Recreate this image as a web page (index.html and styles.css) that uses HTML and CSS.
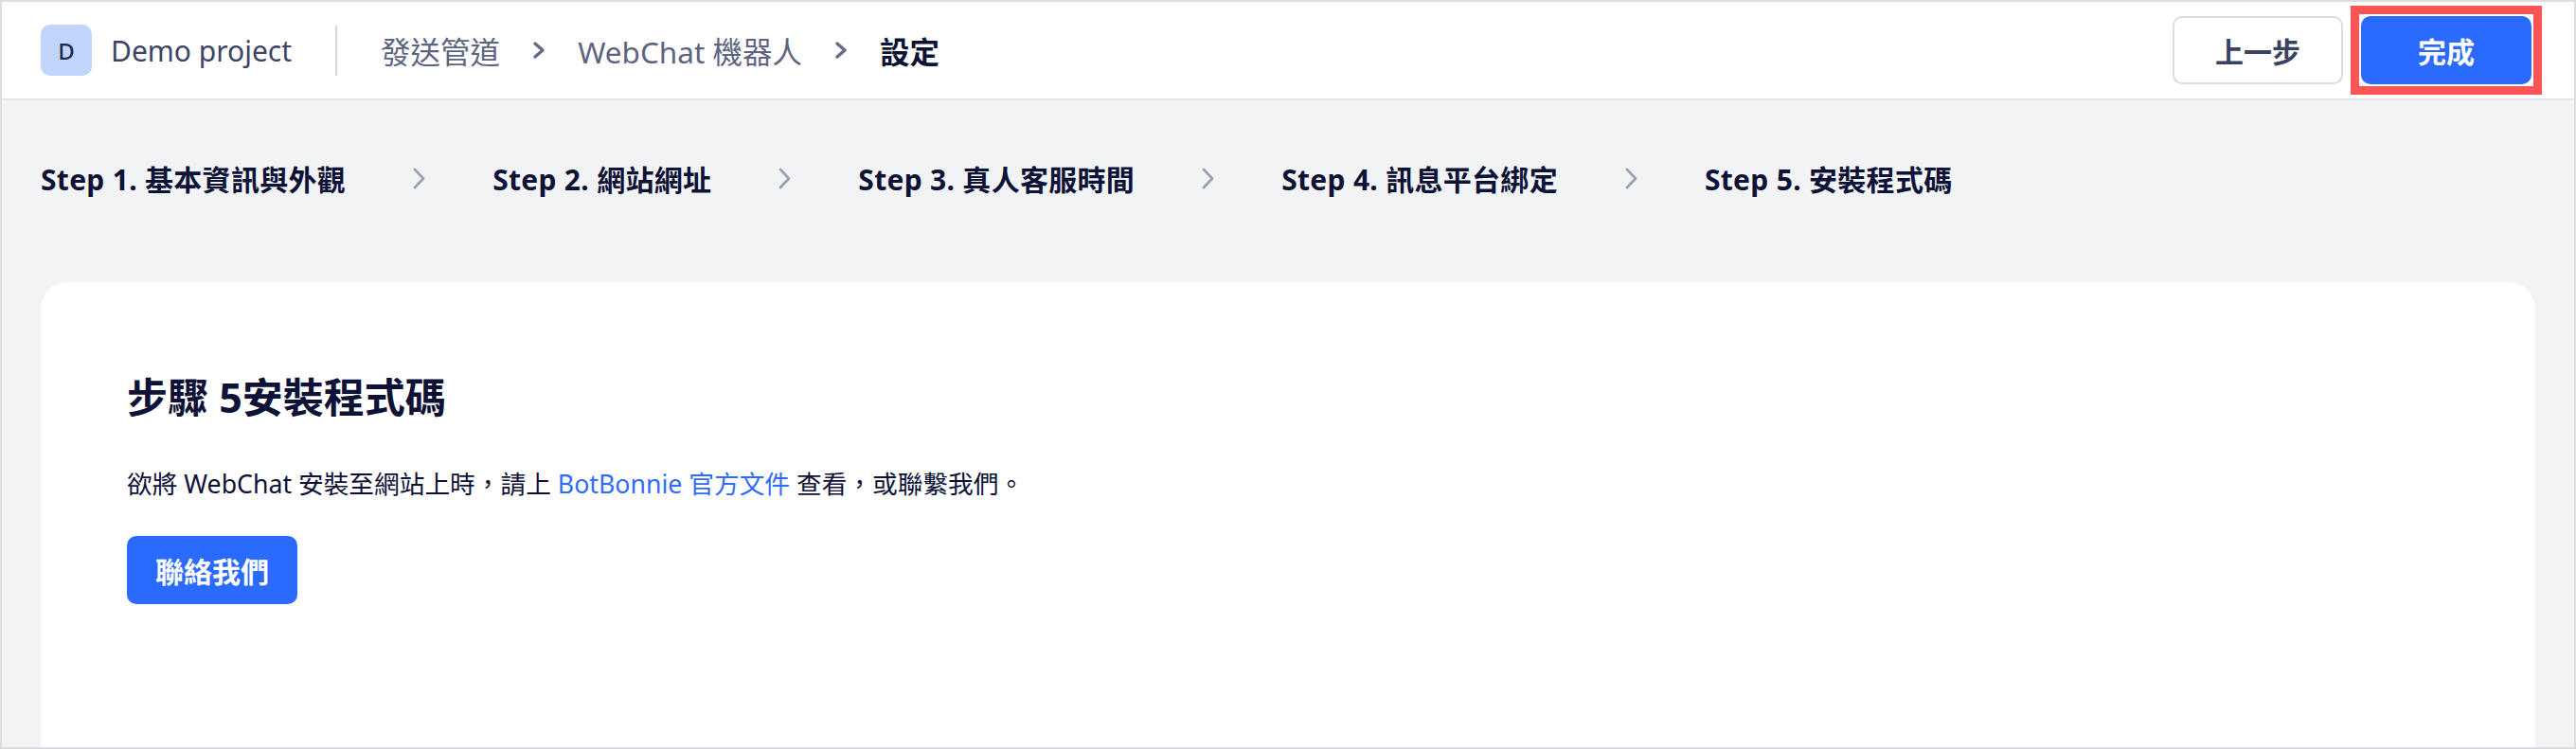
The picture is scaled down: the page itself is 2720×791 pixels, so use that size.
FILE: index.html
```html
<!DOCTYPE html>
<html lang="zh-Hant">
<head>
    <meta charset="UTF-8">
    <meta name="viewport" content="width=device-width, initial-scale=1.0">
    <link rel="stylesheet" href="styles.css">
    <title>WebChat 機器人 - 設定</title>
</head>
<body>
    <div class="screen">
        <header class="topbar">
            <div class="project">
                <span class="avatar">D</span>
                <span class="project-name">Demo project</span>
            </div>
            <span class="divider"></span>
            <nav class="crumbs">
                <span class="crumb">發送管道</span>
                <svg class="crumb-arrow" width="14" height="20" viewBox="0 0 14 20"><polyline points="3,3 11,10 3,17" /></svg>
                <span class="crumb">WebChat 機器人</span>
                <svg class="crumb-arrow" width="14" height="20" viewBox="0 0 14 20"><polyline points="3,3 11,10 3,17" /></svg>
                <span class="crumb current">設定</span>
            </nav>
            <div class="actions">
                <button class="btn btn-outline">上一步</button>
                <button class="btn btn-primary marked">完成</button>
            </div>
        </header>

        <main class="content">
            <div class="steps">
                <span class="step">Step 1. 基本資訊與外觀</span>
                <svg class="step-arrow" width="15" height="25" viewBox="0 0 15 25"><polyline points="3,3 12,12.5 3,22" /></svg>
                <span class="step">Step 2. 網站網址</span>
                <svg class="step-arrow" width="15" height="25" viewBox="0 0 15 25"><polyline points="3,3 12,12.5 3,22" /></svg>
                <span class="step">Step 3. 真人客服時間</span>
                <svg class="step-arrow" width="15" height="25" viewBox="0 0 15 25"><polyline points="3,3 12,12.5 3,22" /></svg>
                <span class="step">Step 4. 訊息平台綁定</span>
                <svg class="step-arrow" width="15" height="25" viewBox="0 0 15 25"><polyline points="3,3 12,12.5 3,22" /></svg>
                <span class="step">Step 5. 安裝程式碼</span>
            </div>

            <section class="card">
                <h2>步驟 5安裝程式碼</h2>
                <p>欲將 WebChat 安裝至網站上時，請上 <a href="#">BotBonnie 官方文件</a> 查看，或聯繫我們。</p>
                <button class="btn btn-primary">聯絡我們</button>
            </section>
        </main>
    </div>
</body>
</html>
```

FILE: styles.css
```css
* {
    box-sizing: border-box;
}

body {
    margin: 0;
    font-family: "Noto Sans", "Noto Sans CJK TC", sans-serif;
    color: #0d1236;
    background: #ffffff;
}

.screen {
    height: 791px;
    border: 2px solid #dcdde1;
    display: flex;
    flex-direction: column;
    overflow: hidden;
}

/* top bar */

.topbar {
    height: 104px;
    flex-shrink: 0;
    background: #ffffff;
    border-bottom: 2px solid #e4e6ea;
    display: flex;
    align-items: center;
    padding: 0 45px 0 41px;
}

.project {
    display: flex;
    align-items: center;
    gap: 20px;
}

.avatar {
    width: 54px;
    height: 54px;
    border-radius: 10px;
    background: #c2d6fd;
    color: #232a4d;
    font-size: 24px;
    font-weight: 500;
    display: flex;
    align-items: center;
    justify-content: center;
}

.project-name {
    font-size: 30px;
    color: #3d4466;
}

.divider {
    width: 2px;
    height: 53px;
    background: #d3d6dd;
    margin: 0 46px 0 46px;
}

.crumbs {
    display: flex;
    align-items: center;
    gap: 34px;
}

.crumb {
    font-size: 31.5px;
    color: #5d6480;
}

.crumb.current {
    color: #0d1236;
    font-weight: 700;
}

.crumb-arrow polyline {
    fill: none;
    stroke: #656c87;
    stroke-width: 3.5;
    stroke-linecap: round;
    stroke-linejoin: round;
}

.actions {
    margin-left: auto;
    display: flex;
    gap: 19px;
}

/* buttons */

.btn {
    font-family: inherit;
    font-size: 30px;
    font-weight: 700;
    min-width: 180px;
    height: 72px;
    padding: 0 28px;
    border-radius: 10px;
    cursor: pointer;
}

.btn-outline {
    background: #ffffff;
    color: #3a4263;
    border: 2px solid #dadce3;
}

.btn-primary {
    background: #2b6aff;
    color: #ffffff;
    border: none;
}

/* annotation box drawn over the finish button */
.marked {
    position: relative;
}

.marked::after {
    content: "";
    position: absolute;
    top: -11px;
    right: -11px;
    bottom: -11px;
    left: -11px;
    border: 9px solid #ff5454;
}

/* main area */

.content {
    flex: 1;
    background: #f2f3f5;
    display: flex;
    flex-direction: column;
    padding: 0 41px;
}

.steps {
    display: flex;
    align-items: center;
    gap: 70px;
    height: 164px;
}

.step {
    font-size: 30px;
    font-weight: 700;
    letter-spacing: 0.3px;
    color: #0d1236;
}

.step-arrow polyline {
    fill: none;
    stroke: #9ca1b3;
    stroke-width: 2.8;
    stroke-linecap: round;
    stroke-linejoin: round;
}

.card {
    flex: 1;
    margin-top: 28px;
    background: #ffffff;
    border-radius: 28px 28px 0 0;
    padding: 94px 91px 0;
}

.card h2 {
    margin: 0;
    font-size: 43px;
    font-weight: 700;
    line-height: 56px;
}

.card p {
    margin: 43px 0 35px;
    font-size: 26.7px;
    line-height: 40px;
}

.card a {
    color: #2f6bff;
    text-decoration: none;
}
```
